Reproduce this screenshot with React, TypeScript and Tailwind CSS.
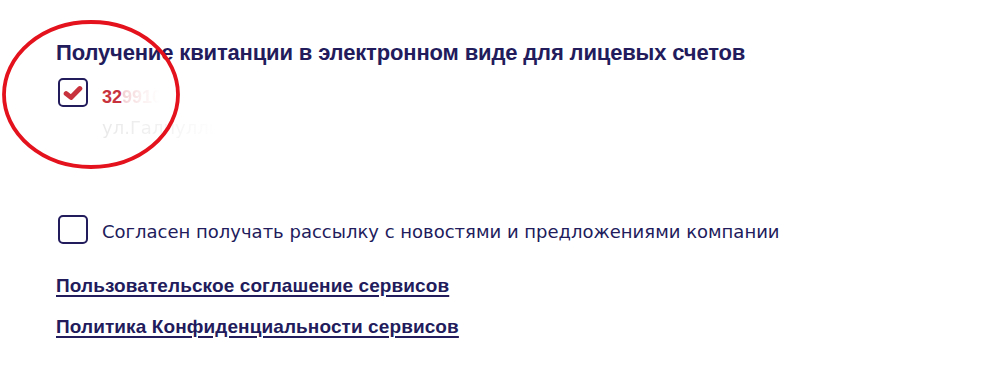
import React from "react";

const bold = { fontFamily: '"Liberation Sans", Arial, sans-serif' };

export default function App() {
  return (
    <div className="relative w-[999px] h-[381px] bg-white overflow-hidden" style={{ fontFamily: '"DejaVu Sans", Verdana, sans-serif' }}>
      <div className="flex flex-col pl-[56px] pt-[40px] text-[#221b5c]">
        <h2 className="text-[22px] leading-[26px] font-bold tracking-[-0.15px] whitespace-nowrap" style={bold}>
          Получение квитанции в электронном виде для лицевых счетов
        </h2>
        <div className="flex items-start gap-[14px] mt-[12px] pl-[2px]">
          <div className="w-[30px] h-[29px] border-2 border-[#221b5c] rounded-[5px] flex items-center justify-center shrink-0">
            <svg width="20" height="16" viewBox="0 0 20 16">
              <path d="M3.2 8.6 L8 12.4 L16.8 3.6" fill="none" stroke="#c8323c" strokeWidth="5" strokeLinecap="round" strokeLinejoin="round" />
            </svg>
          </div>
          <div className="flex flex-col pt-[8px]">
            <div className="text-[18px] leading-[22px] font-bold whitespace-nowrap flex" style={bold}>
              <span className="text-[#c8323c]">32</span>
              <span className="bg-gradient-to-r from-[#f3cfd2] via-[#fbeff0] via-40% to-[#ffffff] to-75% bg-clip-text text-transparent">99100</span>
            </div>
            <div className="text-[18px] leading-[22px] mt-[9px] bg-gradient-to-r from-[#e9e9e9] via-[#f4f4f4] via-50% to-[#ffffff] to-80% bg-clip-text text-transparent w-fit whitespace-nowrap">
              ул.Галиуллина
            </div>
          </div>
        </div>
        <div className="flex items-center gap-[14px] mt-[76px] pl-[2px]">
          <div className="w-[30px] h-[29px] border-2 border-[#221b5c] rounded-[5px] shrink-0" />
          <span className="text-[18px] leading-[22px] whitespace-nowrap mt-[4px]">
            Согласен получать рассылку с новостями и предложениями компании
          </span>
        </div>
        <a className="mt-[31px] text-[19px] leading-[22px] font-bold tracking-[0.1px] underline underline-offset-[3px] decoration-2 w-fit whitespace-nowrap" style={bold}>
          Пользовательское соглашение сервисов
        </a>
        <a className="mt-[19px] text-[19px] leading-[22px] font-bold tracking-[0.1px] underline underline-offset-[3px] decoration-2 w-fit whitespace-nowrap" style={bold}>
          Политика Конфиденциальности сервисов
        </a>
      </div>
      <svg className="absolute left-0 top-0 pointer-events-none" width="999" height="381">
        <ellipse cx="91" cy="94.5" rx="87" ry="72.5" fill="none" stroke="#e3121c" strokeWidth="3.8" />
      </svg>
    </div>
  );
}
